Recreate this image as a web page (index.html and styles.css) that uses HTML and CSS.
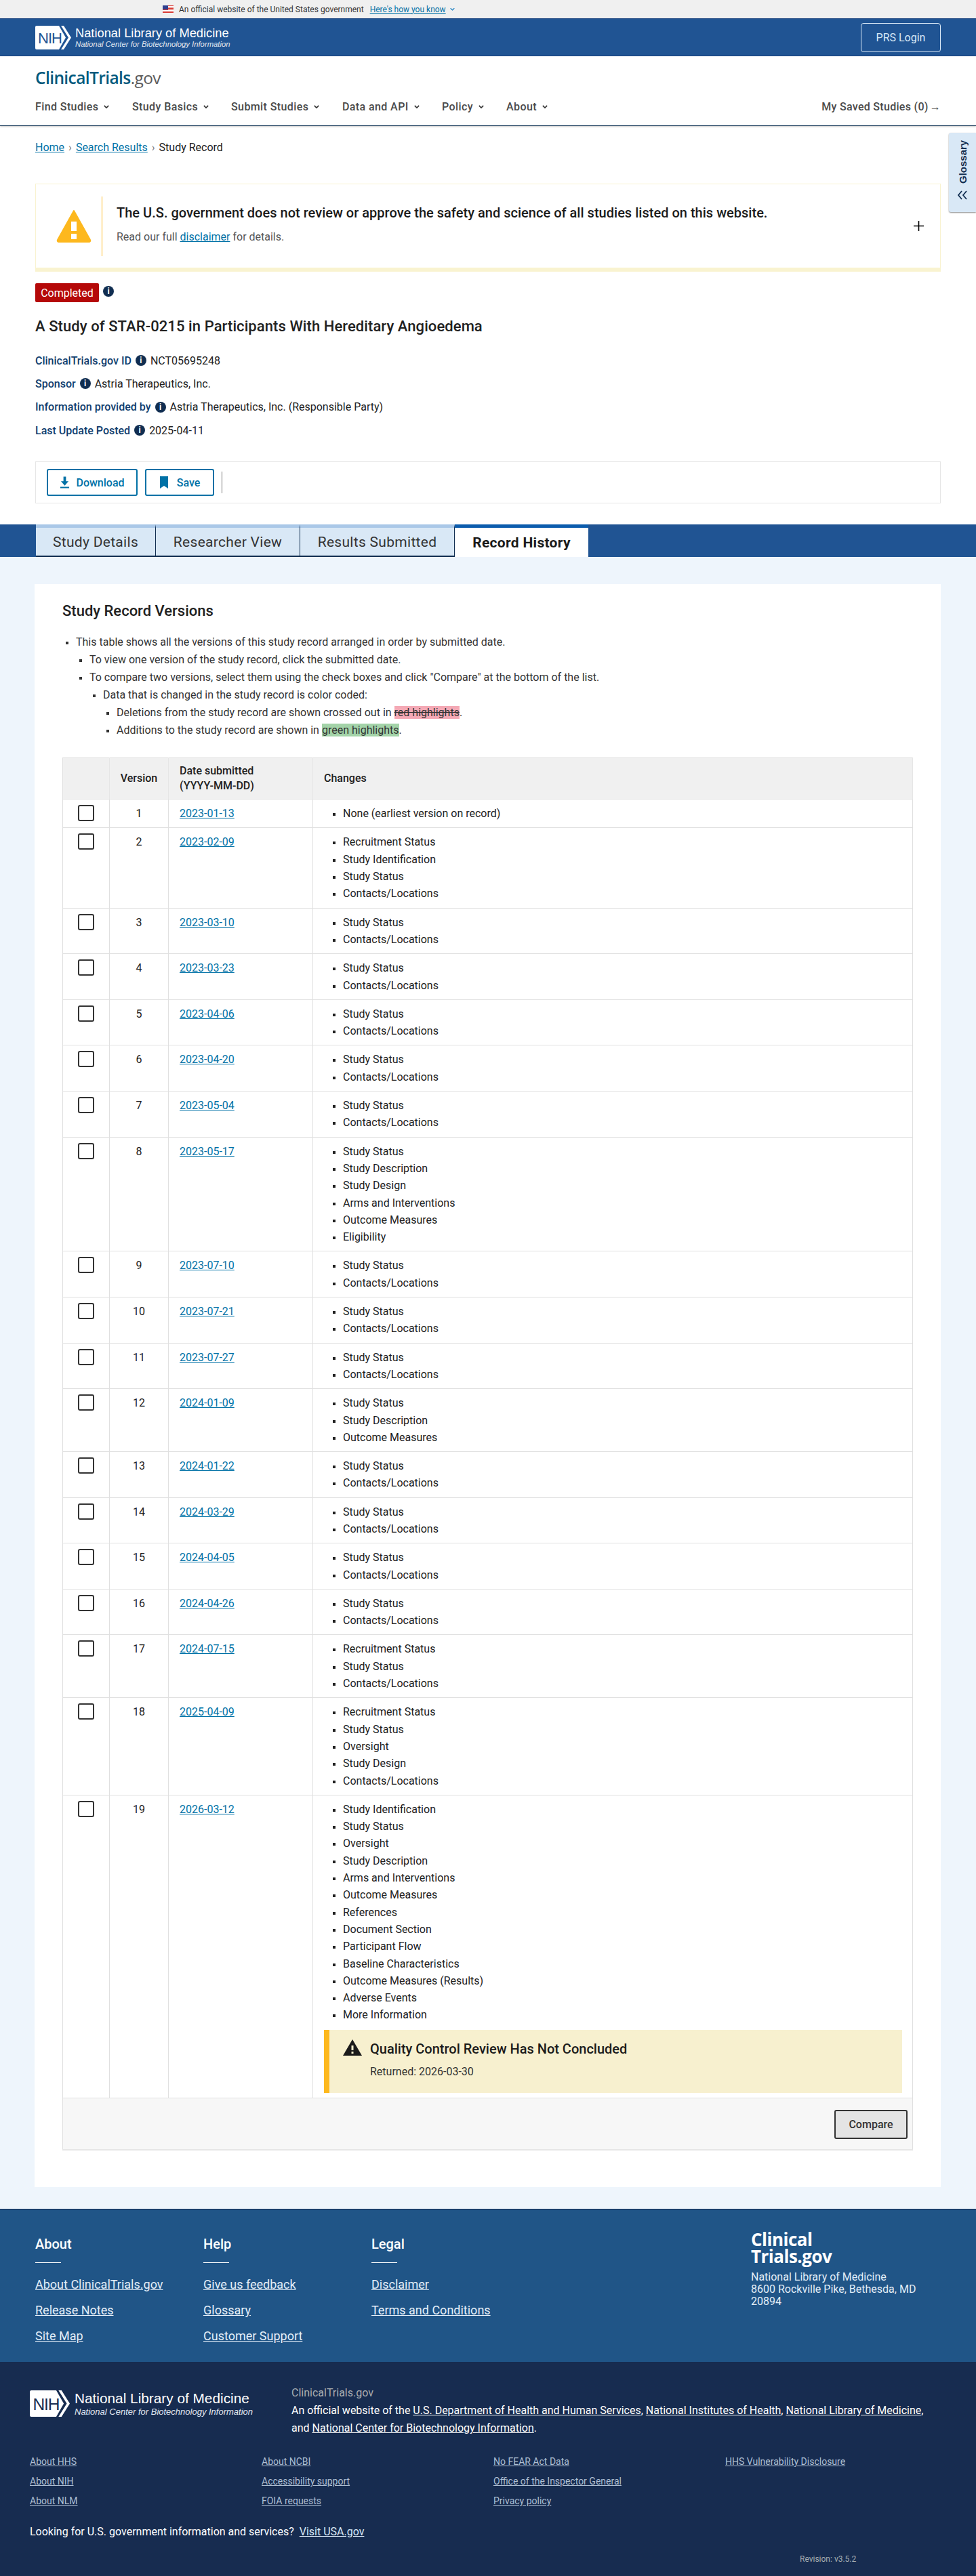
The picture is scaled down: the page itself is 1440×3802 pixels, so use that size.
FILE: index.html
```html
<!DOCTYPE html>
<html lang="en">
<head>
    <meta charset="UTF-8">
    <meta name="viewport" content="width=device-width, initial-scale=1.0">
    <title>Record History | ClinicalTrials.gov</title>
    <link rel="stylesheet" href="styles.css">
</head>
<body>

<div class="gov-banner">
    <svg class="flag" viewBox="0 0 16 11"><rect width="16" height="11" fill="#fff"/><path d="M0 0h16v1H0zM0 2h16v1H0zM0 4h16v1H0zM0 6h16v1H0zM0 8h16v1H0zM0 10h16v1H0z" fill="#d83933"/><rect width="8" height="6" fill="#2e3f8f"/></svg>
    <span>An official website of the United States government</span>
    <a href="#">Here's how you know</a>
    <svg class="gov-chevron" viewBox="0 0 10 6"><path d="M1 1l4 4 4-4" fill="none" stroke="#0071bc" stroke-width="1.5"/></svg>
</div>

<header class="top-bar">
    <a class="nih-brand" href="#">
        <svg class="nih-logo" viewBox="0 0 53 35"><path d="M2 0h33l10 17.500L35 35H2a2 2 0 0 1-2-2V2a2 2 0 0 1 2-2z" fill="#fff"/><path d="M38 0h4l11 17.500L42 35h-4l11-17.500z" fill="#fff"/><text x="4" y="26" class="nih-letters">NIH</text></svg>
        <span class="nih-text">
            <span class="nih-name">National Library of Medicine</span>
            <span class="nih-sub">National Center for Biotechnology Information</span>
        </span>
    </a>
    <a class="prs-login" href="#">PRS Login</a>
</header>

<div class="site-head">
    <a class="site-logo" href="#"><b>ClinicalTrials</b><span>.gov</span></a>
    <nav class="main-nav">
        <a href="#" class="nav-item nav-find">Find Studies<svg viewBox="0 0 10 6"><path d="M1 1l4 4 4-4"/></svg></a>
        <a href="#" class="nav-item nav-basics">Study Basics<svg viewBox="0 0 10 6"><path d="M1 1l4 4 4-4"/></svg></a>
        <a href="#" class="nav-item nav-submit">Submit Studies<svg viewBox="0 0 10 6"><path d="M1 1l4 4 4-4"/></svg></a>
        <a href="#" class="nav-item nav-data">Data and API<svg viewBox="0 0 10 6"><path d="M1 1l4 4 4-4"/></svg></a>
        <a href="#" class="nav-item nav-policy">Policy<svg viewBox="0 0 10 6"><path d="M1 1l4 4 4-4"/></svg></a>
        <a href="#" class="nav-item">About<svg viewBox="0 0 10 6"><path d="M1 1l4 4 4-4"/></svg></a>
        <a href="#" class="saved-link">My Saved Studies (0)<span class="saved-arrow">→</span></a>
    </nav>
</div>

<aside class="glossary-tab">
    <span class="glossary-label">Glossary</span>
    <svg viewBox="0 0 16 14"><path d="M7 1L2 7l5 6M14 1L9 7l5 6" fill="none" stroke="#112e51" stroke-width="1.800"/></svg>
</aside>

<main>
    <div class="record-head">
        <div class="breadcrumb"><a href="#">Home</a><span class="crumb-sep">›</span><a href="#">Search Results</a><span class="crumb-sep">›</span>Study Record</div>

        <section class="disclaimer">
            <svg class="disclaimer-icon" viewBox="0 0 52 52"><path d="M26 3L50 46a2 2 0 0 1-2 3H4a2 2 0 0 1-2-3z" fill="#fdb81e" stroke="#fdb81e" stroke-width="2" stroke-linejoin="round"/><rect x="22" y="19" width="8" height="14" fill="#fff"/><rect x="22" y="37" width="8" height="8" fill="#fff"/></svg>
            <div class="disclaimer-text">
                <h2>The U.S. government does not review or approve the safety and science of all studies listed on this website.</h2>
                <p>Read our full <a href="#">disclaimer</a> for details.</p>
            </div>
            <svg class="disclaimer-plus" viewBox="0 0 14 14"><path d="M7 0v14M0 7h14" stroke="#000" stroke-width="1.500"/></svg>
        </section>

        <div class="status-line">
            <span class="status-badge">Completed</span>
            <span class="info-icon">i</span>
        </div>

        <h1 class="study-title">A Study of STAR-0215 in Participants With Hereditary Angioedema</h1>

        <dl class="study-meta">
            <div><dt>ClinicalTrials.gov ID</dt><span class="info-icon">i</span><dd>NCT05695248</dd></div>
            <div><dt>Sponsor</dt><span class="info-icon">i</span><dd>Astria Therapeutics, Inc.</dd></div>
            <div><dt>Information provided by</dt><span class="info-icon">i</span><dd>Astria Therapeutics, Inc. (Responsible Party)</dd></div>
            <div><dt>Last Update Posted</dt><span class="info-icon">i</span><dd>2025-04-11</dd></div>
        </dl>

        <div class="action-box">
            <button class="action-btn btn-download">
                <svg viewBox="0 0 16 20"><path d="M6 1h4v7h4l-6 7-6-7h4zM1 17h14v2H1z" fill="#0071a6"/></svg>Download
            </button>
            <button class="action-btn btn-save">
                <svg viewBox="0 0 14 20"><path d="M1 1h12v18l-6-4-6 4z" fill="#0071a6"/></svg>Save
            </button>
            <span class="action-divider"></span>
        </div>
    </div>

    <div class="tab-bar">
        <a href="#" class="tab tab-details">Study Details</a>
        <a href="#" class="tab tab-researcher">Researcher View</a>
        <a href="#" class="tab tab-results">Results Submitted</a>
        <a href="#" class="tab tab-active">Record History</a>
    </div>

    <div class="page-band">
        <section class="versions-card">
            <h2 class="versions-title">Study Record Versions</h2>
            <ul class="help-list">
                <li>This table shows all the versions of this study record arranged in order by submitted date.
                    <ul>
                        <li>To view one version of the study record, click the submitted date.</li>
                        <li>To compare two versions, select them using the check boxes and click "Compare" at the bottom of the list.
                            <ul>
                                <li>Data that is changed in the study record is color coded:
                                    <ul>
                                        <li>Deletions from the study record are shown crossed out in <del class="mark-red">red highlights</del>.</li>
                                        <li>Additions to the study record are shown in <ins class="mark-green">green highlights</ins>.</li>
                                    </ul>
                                </li>
                            </ul>
                        </li>
                    </ul>
                </li>
            </ul>

            <table class="versions-table">
                <thead>
                    <tr>
                        <th class="col-check"></th>
                        <th class="col-version">Version</th>
                        <th class="col-date">Date submitted<br>(YYYY-MM-DD)</th>
                        <th class="col-changes">Changes</th>
                    </tr>
                </thead>
                <tbody>
                    <tr><td class="cell-check"><span class="checkbox"></span></td><td class="cell-version">1</td><td><a href="#">2023-01-13</a></td><td><ul><li>None (earliest version on record)</li></ul></td></tr>
                    <tr><td class="cell-check"><span class="checkbox"></span></td><td class="cell-version">2</td><td><a href="#">2023-02-09</a></td><td><ul><li>Recruitment Status</li><li>Study Identification</li><li>Study Status</li><li>Contacts/Locations</li></ul></td></tr>
                    <tr><td class="cell-check"><span class="checkbox"></span></td><td class="cell-version">3</td><td><a href="#">2023-03-10</a></td><td><ul><li>Study Status</li><li>Contacts/Locations</li></ul></td></tr>
                    <tr><td class="cell-check"><span class="checkbox"></span></td><td class="cell-version">4</td><td><a href="#">2023-03-23</a></td><td><ul><li>Study Status</li><li>Contacts/Locations</li></ul></td></tr>
                    <tr><td class="cell-check"><span class="checkbox"></span></td><td class="cell-version">5</td><td><a href="#">2023-04-06</a></td><td><ul><li>Study Status</li><li>Contacts/Locations</li></ul></td></tr>
                    <tr><td class="cell-check"><span class="checkbox"></span></td><td class="cell-version">6</td><td><a href="#">2023-04-20</a></td><td><ul><li>Study Status</li><li>Contacts/Locations</li></ul></td></tr>
                    <tr><td class="cell-check"><span class="checkbox"></span></td><td class="cell-version">7</td><td><a href="#">2023-05-04</a></td><td><ul><li>Study Status</li><li>Contacts/Locations</li></ul></td></tr>
                    <tr><td class="cell-check"><span class="checkbox"></span></td><td class="cell-version">8</td><td><a href="#">2023-05-17</a></td><td><ul><li>Study Status</li><li>Study Description</li><li>Study Design</li><li>Arms and Interventions</li><li>Outcome Measures</li><li>Eligibility</li></ul></td></tr>
                    <tr><td class="cell-check"><span class="checkbox"></span></td><td class="cell-version">9</td><td><a href="#">2023-07-10</a></td><td><ul><li>Study Status</li><li>Contacts/Locations</li></ul></td></tr>
                    <tr><td class="cell-check"><span class="checkbox"></span></td><td class="cell-version">10</td><td><a href="#">2023-07-21</a></td><td><ul><li>Study Status</li><li>Contacts/Locations</li></ul></td></tr>
                    <tr><td class="cell-check"><span class="checkbox"></span></td><td class="cell-version">11</td><td><a href="#">2023-07-27</a></td><td><ul><li>Study Status</li><li>Contacts/Locations</li></ul></td></tr>
                    <tr><td class="cell-check"><span class="checkbox"></span></td><td class="cell-version">12</td><td><a href="#">2024-01-09</a></td><td><ul><li>Study Status</li><li>Study Description</li><li>Outcome Measures</li></ul></td></tr>
                    <tr><td class="cell-check"><span class="checkbox"></span></td><td class="cell-version">13</td><td><a href="#">2024-01-22</a></td><td><ul><li>Study Status</li><li>Contacts/Locations</li></ul></td></tr>
                    <tr><td class="cell-check"><span class="checkbox"></span></td><td class="cell-version">14</td><td><a href="#">2024-03-29</a></td><td><ul><li>Study Status</li><li>Contacts/Locations</li></ul></td></tr>
                    <tr><td class="cell-check"><span class="checkbox"></span></td><td class="cell-version">15</td><td><a href="#">2024-04-05</a></td><td><ul><li>Study Status</li><li>Contacts/Locations</li></ul></td></tr>
                    <tr><td class="cell-check"><span class="checkbox"></span></td><td class="cell-version">16</td><td><a href="#">2024-04-26</a></td><td><ul><li>Study Status</li><li>Contacts/Locations</li></ul></td></tr>
                    <tr><td class="cell-check"><span class="checkbox"></span></td><td class="cell-version">17</td><td><a href="#">2024-07-15</a></td><td><ul><li>Recruitment Status</li><li>Study Status</li><li>Contacts/Locations</li></ul></td></tr>
                    <tr><td class="cell-check"><span class="checkbox"></span></td><td class="cell-version">18</td><td><a href="#">2025-04-09</a></td><td><ul><li>Recruitment Status</li><li>Study Status</li><li>Oversight</li><li>Study Design</li><li>Contacts/Locations</li></ul></td></tr>
                    <tr>
                        <td class="cell-check"><span class="checkbox"></span></td>
                        <td class="cell-version">19</td>
                        <td><a href="#">2026-03-12</a></td>
                        <td class="cell-last">
                            <ul><li>Study Identification</li><li>Study Status</li><li>Oversight</li><li>Study Description</li><li>Arms and Interventions</li><li>Outcome Measures</li><li>References</li><li>Document Section</li><li>Participant Flow</li><li>Baseline Characteristics</li><li>Outcome Measures (Results)</li><li>Adverse Events</li><li>More Information</li></ul>
                            <div class="qc-alert">
                                <svg viewBox="0 0 28 24"><path d="M14 0l14 24H0z" fill="#1b1b1b"/><rect x="12.500" y="9" width="3" height="7" fill="#f7f0cf"/><rect x="12.500" y="18" width="3" height="3" fill="#f7f0cf"/></svg>
                                <div>
                                    <h3>Quality Control Review Has Not Concluded</h3>
                                    <p>Returned: 2026-03-30</p>
                                </div>
                            </div>
                        </td>
                    </tr>
                </tbody>
                <tfoot>
                    <tr><td colspan="4"><button class="compare-btn">Compare</button></td></tr>
                </tfoot>
            </table>
        </section>
    </div>
</main>

<footer>
    <div class="footer-upper">
        <div class="footer-col">
            <h4>About</h4>
            <a href="#">About ClinicalTrials.gov</a>
            <a href="#">Release Notes</a>
            <a href="#">Site Map</a>
        </div>
        <div class="footer-col">
            <h4>Help</h4>
            <a href="#">Give us feedback</a>
            <a href="#">Glossary</a>
            <a href="#">Customer Support</a>
        </div>
        <div class="footer-col">
            <h4>Legal</h4>
            <a href="#">Disclaimer</a>
            <a href="#">Terms and Conditions</a>
        </div>
        <div class="footer-address">
            <div class="footer-logo">Clinical<br>Trials.gov</div>
            <p>National Library of Medicine<br>8600 Rockville Pike, Bethesda, MD 20894</p>
        </div>
    </div>
    <div class="footer-lower">
        <div class="lower-top">
            <a class="nih-brand lower-brand" href="#">
                <svg class="nih-logo" viewBox="0 0 53 35"><path d="M2 0h33l10 17.500L35 35H2a2 2 0 0 1-2-2V2a2 2 0 0 1 2-2z" fill="#fff"/><path d="M38 0h4l11 17.500L42 35h-4l11-17.500z" fill="#fff"/><text x="4" y="26" class="nih-letters lower-letters">NIH</text></svg>
                <span class="nih-text">
                    <span class="nih-name">National Library of Medicine</span>
                    <span class="nih-sub">National Center for Biotechnology Information</span>
                </span>
            </a>
            <div class="official-text">
                <div class="official-name">ClinicalTrials.gov</div>
                <p>An official website of the <a href="#">U.S. Department of Health and Human Services</a>, <a href="#">National Institutes of Health</a>, <a href="#">National Library of Medicine</a>, and <a href="#">National Center for Biotechnology Information</a>.</p>
            </div>
        </div>
        <div class="lower-links">
            <div><a href="#">About HHS</a><a href="#">About NIH</a><a href="#">About NLM</a></div>
            <div><a href="#">About NCBI</a><a href="#">Accessibility support</a><a href="#">FOIA requests</a></div>
            <div><a href="#">No FEAR Act Data</a><a href="#">Office of the Inspector General</a><a href="#">Privacy policy</a></div>
            <div><a href="#">HHS Vulnerability Disclosure</a></div>
        </div>
        <div class="usa-line">Looking for U.S. government information and services? <a href="#">Visit USA.gov</a></div>
        <div class="revision">Revision: v3.5.2</div>
    </div>
</footer>

</body>
</html>
```

FILE: styles.css
```css
* {
    box-sizing: border-box;
}

body {
    margin: 0;
    font-family: 'Roboto', sans-serif;
    font-size: 16px;
    color: #212121;
    background-color: #ffffff;
    position: relative;
}

a {
    color: #0071a6;
}

/* gov banner */
.gov-banner {
    height: 27px;
    background-color: #f0f0f0;
    display: flex;
    align-items: center;
    padding-left: 240px;
    font-size: 12px;
    color: #333333;
}

.gov-banner .flag {
    width: 16px;
    height: 11px;
    margin-right: 8px;
}

.gov-banner a {
    margin-left: 9px;
}

.gov-chevron {
    width: 7px;
    height: 5px;
    margin-left: 6px;
}

/* blue header */
.top-bar {
    height: 56px;
    background-color: #205493;
    border-top: 1px solid #1a4480;
    border-bottom: 1px solid #1a4480;
    display: flex;
    align-items: center;
    justify-content: space-between;
    padding: 0 52px;
}

.nih-brand {
    display: flex;
    align-items: center;
    text-decoration: none;
    color: #ffffff;
}

.nih-logo {
    width: 53px;
    height: 35px;
    flex-shrink: 0;
}

.nih-letters {
    font-family: 'Liberation Sans', sans-serif;
    font-size: 22px;
    fill: #205493;
    letter-spacing: -1px;
}

.lower-letters {
    fill: #172c50;
}

.nih-text {
    display: flex;
    flex-direction: column;
    margin-left: 6px;
}

.nih-name {
    font-family: 'Liberation Sans', sans-serif;
    font-size: 18.300px;
    line-height: 21px;
}

.nih-sub {
    font-family: 'Liberation Sans', sans-serif;
    font-size: 11.300px;
    font-style: italic;
    line-height: 13px;
    color: #e4e9f2;
}

.prs-login {
    width: 118px;
    height: 43px;
    border: 1px solid #d9e8f6;
    border-radius: 4px;
    color: #d9e8f6;
    text-decoration: none;
    display: flex;
    align-items: center;
    justify-content: center;
}

/* site head + nav */
.site-head {
    height: 103px;
    border-bottom: 1px solid #1f3f5f;
    box-shadow: 0 1px 2px rgba(0, 0, 0, 0.25);
    padding: 0 52px;
    position: relative;
}

.site-logo {
    display: block;
    padding-top: 16px;
    font-family: 'Open Sans', sans-serif;
    font-size: 24.500px;
    line-height: 32px;
    letter-spacing: -0.600px;
    text-decoration: none;
    color: #5c5c5c;
}

.site-logo b {
    color: #00597c;
    font-weight: 600;
}

.main-nav {
    display: flex;
    align-items: center;
    margin-top: 14px;
    height: 24px;
    font-weight: 500;
    color: #4a4a4a;
}

.nav-item {
    color: #4a4a4a;
    text-decoration: none;
    display: flex;
    align-items: center;
    letter-spacing: 0.400px;
}

.nav-item svg {
    width: 8px;
    height: 5px;
    margin-left: 8px;
    fill: none;
    stroke: #333333;
    stroke-width: 2;
}

.nav-find { width: 143px; }
.nav-basics { width: 146px; }
.nav-submit { width: 164px; }
.nav-data { width: 147px; }
.nav-policy { width: 95px; }

.saved-link {
    margin-left: auto;
    color: #4a4a4a;
    text-decoration: none;
    letter-spacing: 0.300px;
}

.saved-arrow {
    margin-left: 2px;
}

/* glossary tab on the right edge */
.glossary-tab {
    position: absolute;
    top: 196px;
    right: 0;
    width: 40px;
    height: 117px;
    background-color: #d9e8f6;
    border-radius: 3px 0 0 3px;
    box-shadow: 0 1px 2px rgba(0, 0, 0, 0.45);
    display: flex;
    flex-direction: column;
    align-items: center;
    padding-top: 12px;
}

.glossary-label {
    writing-mode: vertical-rl;
    transform: rotate(180deg);
    font-family: 'Liberation Sans', sans-serif;
    font-size: 15px;
    font-weight: 700;
    color: #112e51;
    height: 63px;
}

.glossary-tab svg {
    width: 16px;
    height: 14px;
    margin-top: 10px;
}

/* record head */
.record-head {
    padding: 0 52px;
}

.breadcrumb {
    height: 85px;
    padding-top: 20px;
    line-height: 24px;
}

.crumb-sep {
    margin: 0 6px;
    color: #757575;
}

.disclaimer {
    height: 130px;
    border: 1px solid #f9f3d0;
    border-bottom-width: 6px;
    display: flex;
    align-items: center;
    padding: 0 24px 0 30px;
}

.disclaimer-icon {
    width: 52px;
    height: 52px;
    flex-shrink: 0;
}

.disclaimer-text {
    margin-left: 15px;
    padding-left: 21px;
    border-left: 1px solid #fdb81e;
    height: 88px;
    flex: 1;
    padding-top: 11px;
}

.disclaimer-text h2 {
    margin: 0;
    font-size: 20px;
    font-weight: 500;
    line-height: 26px;
    letter-spacing: 0.020px;
    color: #1b1b1b;
}

.disclaimer-text p {
    margin: 11px 0 0;
    line-height: 24px;
    color: #555555;
}

.disclaimer-plus {
    width: 15px;
    height: 15px;
}

.status-line {
    display: flex;
    align-items: center;
    margin-top: 17px;
}

.status-badge {
    width: 94px;
    height: 28px;
    background-color: #b50909;
    border-radius: 2px;
    color: #ffffff;
    display: flex;
    align-items: center;
    justify-content: center;
}

.info-icon {
    width: 16px;
    height: 16px;
    border-radius: 50%;
    background-color: #112e51;
    color: #ffffff;
    font-size: 12px;
    font-weight: 700;
    line-height: 16px;
    text-align: center;
    display: inline-block;
    flex-shrink: 0;
}

.status-line .info-icon {
    margin-left: 6px;
    margin-bottom: 4px;
}

.study-title {
    margin: 20px 0 0;
    font-size: 22px;
    font-weight: 500;
    line-height: 32px;
    letter-spacing: 0.080px;
    color: #212121;
}

.study-meta {
    margin: 17px 0 0;
}

.study-meta div {
    display: flex;
    align-items: center;
    height: 34.300px;
}

.study-meta dt {
    font-weight: 500;
    color: #0f3d6e;
}

.study-meta .info-icon {
    margin: 0 6px;
}

.study-meta dd {
    margin: 0;
}

.action-box {
    margin-top: 29px;
    height: 62px;
    border: 1px solid #e6e6e6;
    display: flex;
    align-items: center;
    padding-left: 16px;
}

.action-btn {
    height: 40px;
    background-color: #ffffff;
    border: 2px solid #0071a6;
    border-radius: 3px;
    color: #0071a6;
    font-family: 'Roboto', sans-serif;
    font-size: 16px;
    font-weight: 500;
    display: flex;
    align-items: center;
    justify-content: center;
    cursor: pointer;
}

.action-btn svg {
    height: 20px;
    margin-right: 9px;
}

.btn-download {
    width: 134px;
}

.btn-download svg {
    width: 15px;
}

.btn-save {
    width: 102px;
    margin-left: 11px;
}

.btn-save svg {
    width: 14px;
    margin-right: 12px;
}

.action-divider {
    width: 1px;
    height: 32px;
    background-color: #757575;
    margin-left: 11px;
}

/* tabs */
.tab-bar {
    margin-top: 31px;
    height: 48px;
    background-color: #205493;
    padding-left: 53px;
    display: flex;
}

.tab {
    height: 48px;
    background-color: #d9e8f6;
    border-top: 5px solid #aac8e8;
    border-right: 1px solid #112e51;
    border-bottom: 2px solid #112e51;
    color: #333333;
    text-decoration: none;
    font-size: 21px;
    letter-spacing: 0.300px;
    display: flex;
    align-items: center;
    justify-content: center;
}

.tab-details { width: 177px; }
.tab-researcher { width: 213px; }
.tab-results { width: 228px; }

.tab-active {
    width: 197px;
    background-color: #ffffff;
    border-top-color: #0b5cad;
    border-right: none;
    border-bottom: none;
    color: #1b1b1b;
    font-weight: 700;
}

/* card */
.page-band {
    background-color: #eef5fc;
    padding: 40px 52px 32px 51px;
}

.versions-card {
    background-color: #ffffff;
    padding: 24px 41px 57px;
    height: 2366px;
}

.versions-title {
    margin: 0;
    font-size: 22px;
    font-weight: 500;
    line-height: 32px;
    color: #212121;
}

.help-list {
    margin: 17px 0 0;
    padding-left: 20px;
    list-style: square;
    color: #333333;
    line-height: 26px;
}

.help-list ul {
    margin: 0;
    padding-left: 20px;
    list-style: square;
}

.mark-red {
    background-color: #f4a9b5;
}

.mark-green {
    background-color: #a3d3a8;
    text-decoration: none;
}

/* table */
.versions-table {
    margin-top: 27px;
    width: 100%;
    border-collapse: collapse;
    table-layout: fixed;
    border: 1px solid #dfdfdf;
}

.versions-table th {
    background-color: #f0f0f0;
    height: 61px;
    text-align: left;
    font-weight: 500;
    line-height: 22px;
    padding: 0 16px;
    border-right: 1px solid #e6e6e6;
    color: #212121;
}

.versions-table th.col-version {
    text-align: center;
    padding: 0;
}

.col-check { width: 69px; }
.col-version { width: 87px; }
.col-date { width: 213px; }

.versions-table td {
    padding: 8px 16px;
    border: 1px solid #e0e0e0;
    vertical-align: top;
    line-height: 25.300px;
    color: #212121;
}

.versions-table td.cell-check {
    padding: 8px 0 0 22px;
    line-height: 0;
}

.versions-table td.cell-version {
    text-align: center;
    padding-left: 0;
    padding-right: 0;
}

.versions-table td ul {
    margin: 0;
    padding-left: 28px;
    list-style: square;
}

.versions-table li::marker {
    font-size: 14px;
}

.help-list li::marker {
    font-size: 14px;
}

.checkbox {
    display: inline-block;
    width: 24px;
    height: 24px;
    border: 2px solid #333333;
    border-radius: 3px;
    background-color: #ffffff;
}

.versions-table td.cell-last {
    padding: 8px 15px 7px 16px;
}

.qc-alert {
    margin-top: 9px;
    height: 93px;
    background-color: #f7f0cf;
    border-left: 8px solid #fdb81e;
    display: flex;
    padding: 14px 0 0 20px;
}

.qc-alert svg {
    width: 28px;
    height: 24px;
    flex-shrink: 0;
}

.qc-alert h3 {
    margin: 0 0 0 12px;
    font-size: 20px;
    font-weight: 500;
    line-height: 28px;
    color: #1b1b1b;
}

.qc-alert p {
    margin: 8px 0 0 12px;
    line-height: 24px;
    color: #333333;
}

.versions-table tfoot td {
    height: 77px;
    background-color: #f7f7f7;
    padding: 17px 7px 0 0;
    text-align: right;
    border-bottom: 2px solid #e6e6e6;
}

.compare-btn {
    width: 108px;
    height: 43px;
    background-color: #e4e4e4;
    border: 2px solid #333333;
    border-radius: 3px;
    font-family: 'Roboto', sans-serif;
    font-size: 16px;
    font-weight: 500;
    color: #333333;
    cursor: pointer;
}

/* footer */
.footer-upper {
    height: 226px;
    background-color: #205587;
    border-top: 2px solid #1a3f6c;
    padding: 35px 52px 0;
    display: flex;
    color: #ffffff;
}

.footer-col {
    width: 248px;
    display: flex;
    flex-direction: column;
    align-items: flex-start;
}

.footer-col h4 {
    margin: 0;
    font-size: 20px;
    font-weight: 500;
    line-height: 30px;
    padding-bottom: 13px;
    position: relative;
    margin-bottom: 13px;
}

.footer-col h4::after {
    content: "";
    position: absolute;
    left: 0;
    bottom: 0;
    width: 38px;
    height: 1px;
    background-color: #ffffff;
}

.footer-col a {
    color: #e4eef8;
    font-size: 18px;
    line-height: 38px;
}

.footer-address {
    margin-left: 312px;
    width: 246px;
    margin-top: -4px;
}

.footer-logo {
    font-family: 'Open Sans', sans-serif;
    font-size: 26px;
    font-weight: 700;
    line-height: 25px;
    letter-spacing: -0.500px;
    color: #ffffff;
}

.footer-address p {
    margin: 9px 0 0;
    line-height: 18px;
    color: #e4eef8;
}

.footer-lower {
    height: 316px;
    background-color: #172c50;
    padding: 30px 44px 0;
    position: relative;
    color: #ffffff;
}

.lower-top {
    display: flex;
}

.lower-brand {
    width: 386px;
    height: 60px;
    align-items: flex-start;
    padding-top: 12px;
}

.lower-brand .nih-logo {
    width: 59px;
    height: 39px;
}

.lower-brand .nih-text {
    margin-left: 7px;
}

.lower-brand .nih-name {
    font-size: 20.800px;
    line-height: 24px;
}

.lower-brand .nih-sub {
    font-size: 13px;
    line-height: 16px;
}

.official-text {
    flex: 1;
    padding-top: 3px;
}

.official-name {
    color: #a9aeb1;
    line-height: 26px;
}

.official-text p {
    margin: 0;
    line-height: 26px;
    width: 950px;
}

.official-text a {
    color: #ffffff;
}

.lower-links {
    margin-top: 22px;
    display: grid;
    grid-template-columns: repeat(4, 342px);
}

.lower-links a {
    display: block;
    color: #aebfd3;
    font-size: 14px;
    line-height: 29px;
}

.usa-line {
    margin-top: 18px;
    line-height: 26px;
}

.usa-line a {
    color: #d9e8f6;
    margin-left: 4px;
}

.revision {
    position: absolute;
    left: 1180px;
    top: 284px;
    font-size: 12px;
    color: #a9aeb1;
}
```
